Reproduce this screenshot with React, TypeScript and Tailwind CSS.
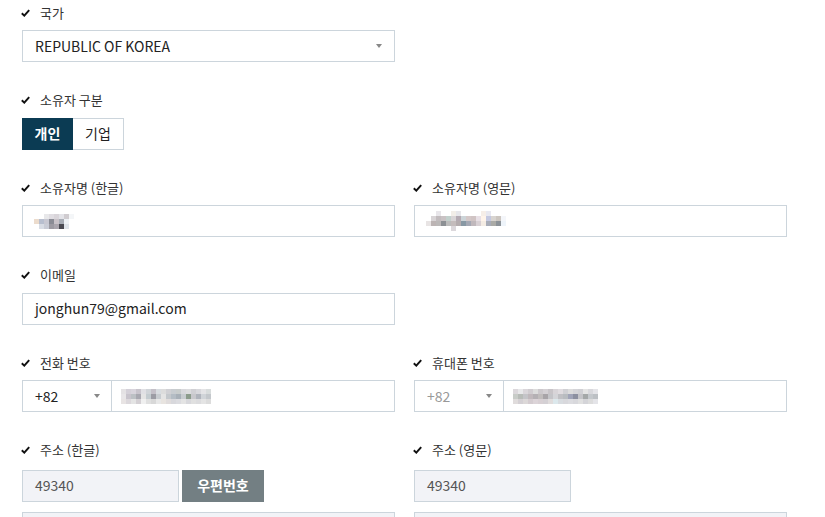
import React from 'react';

const font = { fontFamily: '"Noto Sans CJK KR", "Noto Sans", sans-serif' };

const Check = () => (
  <svg width="9" height="8" viewBox="0 0 9 8" className="shrink-0">
    <path d="M0.8 4.2 L3.3 6.6 L8.2 1.2" fill="none" stroke="#111" strokeWidth="2" />
  </svg>
);

const Label = ({ children }: { children: React.ReactNode }) => (
  <div className="-ml-[1px] flex h-[21px] items-center gap-[10px] text-[13px] text-[#333]">
    <Check />
    <span>{children}</span>
  </div>
);

const Caret = () => (
  <span className="h-0 w-0 border-x-[3.5px] border-t-[4px] border-x-transparent border-t-[#888]" />
);

// pixelated blocks standing in for blurred personal data
const Mosaic = ({ rows }: { rows: string[][] }) => (
  <div className="flex flex-col">
    {rows.map((r, i) => (
      <div key={i} className="flex">
        {r.map((c, j) => (
          <div key={j} className="h-[5px] w-[5px]" style={{ background: c }} />
        ))}
      </div>
    ))}
  </div>
);

const nameKo = [
  ['#fff', '#fff', '#e8e8ea', '#e0dde2', '#d9d5da', '#e3e3e8', '#d0ccd0', '#f4f6f8', '#fff'],
  ['#ecdccd', '#b8bfcf', '#c8c8d2', '#8a8c95', '#c8c2c8', '#a8adb6', '#eef2f6', '#fff', '#fff'],
  ['#fff', '#d8dce4', '#c9ccd6', '#9c9aa2', '#aaa6ae', '#4a4a52', '#dfe4ea', '#fff', '#fff'],
];

const nameEn = [
  ['#fff', '#fff', '#e8e6ea', '#fff', '#fff', '#f2eee8', '#e6e6ea', '#fff', '#fff', '#fff', '#fff', '#f6eee8', '#e8e8f0', '#fff', '#fff', '#fff', '#fff', '#fff'],
  ['#fff', '#d8d4d6', '#c2bcbe', '#c9c2c4', '#c2d0cc', '#d8d4d6', '#b4aab2', '#ccd4d8', '#d4c8c8', '#d0c4c4', '#e8e0e6', '#fff4ea', '#c4c8e0', '#d8d4d0', '#ccc6c0', '#f4f6fa', '#fff', '#fff'],
  ['#e8e4e4', '#bcb4b4', '#bbb8b8', '#8c9094', '#bcbcbc', '#c4bcbc', '#b4acae', '#8898a4', '#a4a8b4', '#c0b8bc', '#d8d0d4', '#f4ece4', '#a8acb8', '#aaaaa6', '#8c9298', '#eef4fa', '#fff', '#fff'],
  ['#fff', '#fff', '#fff', '#fff', '#fff', '#dcd8dc', '#fff', '#fff', '#fff', '#fff', '#fff', '#fff', '#fff', '#fff', '#fff', '#fff', '#fff', '#fff'],
];

const phone = [
  ['#e4e2e4', '#d4d0d8', '#d8d4dc', '#c8c4cc', '#e0e0e4', '#d0d4d8', '#c4c0c8', '#d8dce0', '#dcdcdc', '#d0d0d4', '#c8ccd0', '#c8cccc', '#d8d8dc', '#dcdcde', '#d0d0d4', '#d8d8dc', '#e4e4e6', '#d8dcdc'],
  ['#e8e6e8', '#c8c4cc', '#bcc0c4', '#a8a8b0', '#e4e4e4', '#c4ccd0', '#9c9ca4', '#c8ccd0', '#e4e4e4', '#c4c8cc', '#b4bcc4', '#a8b0b8', '#c8ccd0', '#8c9c8c', '#c8c8cc', '#b0b4bc', '#d0d4d8', '#c4c8cc'],
  ['#e8e4e4', '#dcd8dc', '#e4e4e4', '#d4d0d4', '#f0f0f0', '#e0e0e0', '#d8d8d8', '#e8e8e8', '#e8e4e0', '#e0dcdc', '#d8d8dc', '#dcdce0', '#e4e4e4', '#d8d8dc', '#e0e0e0', '#dcdcde', '#e4e4e4', '#dcdcdc'],
];

const mobile = [
  ['#dcd8dc', '#e8e8ea', '#dad6da', '#d0ccd0', '#dcdcdc', '#ccc8cc', '#d4d0d4', '#c8c4c8', '#d8d4d8', '#e0dce0', '#d0d0d4', '#dcdcdc', '#d4d4d8', '#d0d0d4', '#e4e4e4', '#d8d8dc', '#e4e4e8'],
  ['#c8ccc8', '#b8bcb8', '#c4c4c8', '#c0b8bc', '#b4b0b4', '#c0bcbc', '#a8a4a8', '#c4c4c8', '#d4d4d8', '#c0c0c4', '#b8bcc0', '#a0a4b8', '#8c90a0', '#c4c4c8', '#a4a8a8', '#c4c8cc', '#bcc0c4'],
  ['#e0dcdc', '#d4d0d4', '#dcd8d8', '#d4ccd0', '#dcd4d8', '#d8d0d4', '#d4d0d4', '#e0dcdc', '#dce8ec', '#d8dce0', '#d8d8dc', '#dcdce0', '#d8d8dc', '#e0e0e0', '#d4d4d8', '#dcdcdc', '#e4e4e8'],
];

const Field = ({ label, children }: { label: string; children: React.ReactNode }) => (
  <div className="pb-[27.5px]">
    <Label>{label}</Label>
    {children}
  </div>
);

const box = 'h-[32px] border border-[#ccd5dc] bg-white';

const PhoneInput = ({ muted, data }: { muted?: boolean; data: string[][] }) => (
  <div className={`mt-[7px] flex ${box}`}>
    <div className="flex w-[89px] items-center justify-between border-r border-[#ccd5dc] pl-[12px] pr-[11px]">
      <span className={`text-[14px] ${muted ? 'text-[#999]' : 'text-[#222]'}`}>+82</span>
      <Caret />
    </div>
    <div className="flex items-center pl-[9px]">
      <Mosaic rows={data} />
    </div>
  </div>
);

export default function App() {
  return (
    <div className="h-[517px] w-[825px] overflow-hidden bg-white pt-[2px]" style={font}>
      <div className="ml-[22px] grid grid-cols-[373px_373px] gap-x-[19px]">
        <Field label="국가">
          <div className={`mt-[7px] flex items-center justify-between px-[12px] ${box}`}>
            <span className="text-[14px] text-[#222]">REPUBLIC OF KOREA</span>
            <Caret />
          </div>
        </Field>
        <div />

        <Field label="소유자 구분">
          <div className="mt-[7px] flex h-[32px] text-[14px]">
            <div className="flex w-[51px] items-center justify-center bg-[#0b3b53] font-bold text-white">개인</div>
            <div className="flex w-[51px] items-center justify-center border border-l-0 border-[#ccd5dc] text-[#222]">기업</div>
          </div>
        </Field>
        <div />

        <Field label="소유자명 (한글)">
          <div className={`mt-[7px] flex items-center pl-[11px] ${box}`}>
            <Mosaic rows={nameKo} />
          </div>
        </Field>
        <Field label="소유자명 (영문)">
          <div className={`mt-[7px] flex items-center pl-[11px] ${box}`}>
            <Mosaic rows={nameEn} />
          </div>
        </Field>

        <Field label="이메일">
          <div className={`mt-[7px] flex items-center px-[12px] ${box}`}>
            <span className="text-[14px] text-[#222]">jonghun79@gmail.com</span>
          </div>
        </Field>
        <div />

        <Field label="전화 번호">
          <PhoneInput data={phone} />
        </Field>
        <Field label="휴대폰 번호">
          <PhoneInput muted data={mobile} />
        </Field>

        <Field label="주소 (한글)">
          <div className="mt-[9px] flex h-[32px] gap-[3px]">
            <div className="flex w-[157px] items-center border border-[#ccd5dc] bg-[#f2f3f7] px-[12px] text-[14px] text-[#555]">49340</div>
            <button className="w-[82px] bg-[#737f83] text-[14px] font-bold text-white">우편번호</button>
          </div>
          <div className="mt-[10px] h-[32px] border border-[#ccd5dc] bg-[#f2f3f7]" />
        </Field>
        <Field label="주소 (영문)">
          <div className="mt-[9px] flex h-[32px]">
            <div className="flex w-[157px] items-center border border-[#ccd5dc] bg-[#f2f3f7] px-[12px] text-[14px] text-[#555]">49340</div>
          </div>
          <div className="mt-[10px] h-[32px] border border-[#ccd5dc] bg-[#f2f3f7]" />
        </Field>
      </div>
    </div>
  );
}
